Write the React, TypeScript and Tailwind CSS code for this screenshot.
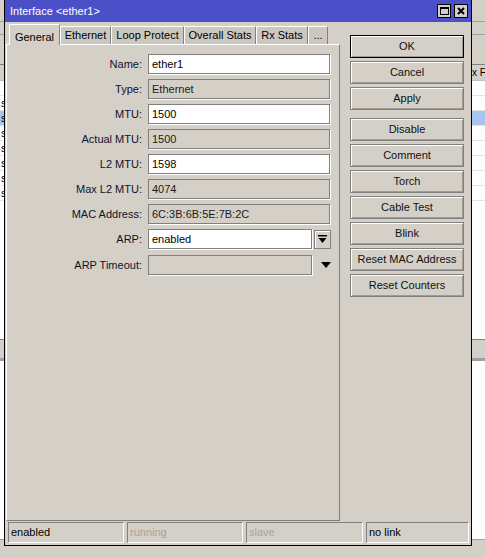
import React from 'react';

const FONT = { fontFamily: '"Liberation Sans", Arial, sans-serif' };

const TABS = [
  { label: 'General', w: 'w-[51px]' },
  { label: 'Ethernet', w: 'w-[51px]' },
  { label: 'Loop Protect', w: 'w-[73px]' },
  { label: 'Overall Stats', w: 'w-[72px]' },
  { label: 'Rx Stats', w: 'w-[52px]' },
  { label: '...', w: 'w-[20px]' },
];

const FIELDS = [
  { label: 'Name:', value: 'ether1', edit: true },
  { label: 'Type:', value: 'Ethernet', edit: false },
  { label: 'MTU:', value: '1500', edit: true },
  { label: 'Actual MTU:', value: '1500', edit: false },
  { label: 'L2 MTU:', value: '1598', edit: true },
  { label: 'Max L2 MTU:', value: '4074', edit: false },
  { label: 'MAC Address:', value: '6C:3B:6B:5E:7B:2C', edit: false },
];

const BUTTONS = [
  ['OK', 'Cancel', 'Apply'],
  ['Disable', 'Comment', 'Torch', 'Cable Test', 'Blink', 'Reset MAC Address', 'Reset Counters'],
];

const STATUS = [
  { text: 'enabled', w: 'w-[116px]', dim: false },
  { text: 'running', w: 'w-[116px]', dim: true },
  { text: 'slave', w: 'w-[117px]', dim: true },
  { text: 'no link', w: 'w-[103px]', dim: false },
];

const Label = ({ children }: { children: React.ReactNode }) => (
  <div className="w-[136px] shrink-0 text-right pr-[1px] text-[#10102a]">{children}</div>
);

const Field = ({ value, edit }: { value: string; edit: boolean }) => (
  <div
    className={`h-[20px] flex items-center px-[3px] border border-[#808080] shadow-[1px_1px_0_#fff] ${
      edit ? 'bg-white text-black' : 'bg-[#d4d0c8] text-[#1a1a1a]'
    }`}
  >
    {value}
  </div>
);

const Btn = ({ label, primary }: { label: string; primary?: boolean }) => (
  <div
    className={`h-[23px] flex items-center justify-center text-[#111] border shadow-[inset_1px_1px_0_#fff,inset_-1px_-1px_0_#a09c94] ${
      primary ? 'border-black' : 'border-[#808080]'
    }`}
  >
    {label}
  </div>
);

function Background() {
  return (
    <div className="absolute inset-0 flex flex-col bg-[#d4d0c8]">
      <div className="h-[22px] border-b border-[#a0a0a0]" />
      <div className="h-[13px] border-b border-[#a0a0a0]" />
      <div className="h-[30px] border-b border-[#808080]" />
      <div className="h-[16px] flex items-center pl-[472px] text-[10px] text-black border-b border-[#c0c0c0] whitespace-nowrap">
        x F
      </div>
      <div className="h-[258px] bg-white flex flex-col">
        <div className="h-[15px] border-b border-[#e4e4e4]" />
        {Array.from({ length: 7 }).map((_, i) => (
          <div
            key={i}
            className={`h-[15px] flex items-center pl-[1px] text-[11px] text-black border-b border-[#e4e4e4] ${
              i === 1 ? 'bg-[#a6c6ee]' : ''
            }`}
          >
            s
          </div>
        ))}
      </div>
      <div className="h-[22px] border-t border-[#808080] border-b-[3px] border-b-[#a0a0a0]" />
      <div className="h-[178px] bg-white" />
      <div className="flex-1 border-t border-[#a0a0a0]" />
    </div>
  );
}

export default function App() {
  return (
    <div className="relative w-[485px] h-[558px] overflow-hidden text-[11px]" style={FONT}>
      <Background />

      {/* dialog window */}
      <div className="absolute left-[4px] top-[-1px] w-[468px] h-[547px] border border-black bg-[#d4d0c8] flex flex-col">
        <div className="h-[22px] bg-[#4b50c9] flex items-center pl-[5px] pr-[3px]">
          <span className="flex-1 text-white text-[11px]">Interface &lt;ether1&gt;</span>
          <div className="w-[14px] h-[14px] border border-black bg-[#d4d0c8] flex items-center justify-center">
            <div className="w-[9px] h-[8px] border border-black border-t-2" />
          </div>
          <div className="w-[14px] h-[14px] ml-[3px] border border-black bg-[#d4d0c8] flex items-center justify-center">
            <svg width="8" height="8" viewBox="0 0 8 8">
              <path d="M1 1 L7 7 M7 1 L1 7" stroke="#000" strokeWidth="2" />
            </svg>
          </div>
        </div>

        <div className="flex-1 flex flex-col">
          <div className="flex">
            {/* tab control */}
            <div className="w-[334px] ml-[1px] flex flex-col">
              <div className="h-[22px] flex items-end pl-[3px]">
                {TABS.map((t, i) =>
                  i === 0 ? (
                    <div
                      key={t.label}
                      className={`${t.w} h-[21px] -mb-[1px] relative z-10 bg-[#d4d0c8] border-t border-l border-white border-r border-r-[#808080] flex items-start justify-center pt-[4px] text-black`}
                    >
                      {t.label}
                    </div>
                  ) : (
                    <div
                      key={t.label}
                      className={`${t.w} h-[18px] bg-[#ccc8c0] border-t border-l border-white border-r border-r-[#808080] flex items-center justify-center text-black`}
                    >
                      {t.label}
                    </div>
                  ),
                )}
              </div>
              <div className="h-[477px] border-t border-l border-white border-r border-b border-r-[#808080] border-b-[#808080] pt-[9px] flex flex-col gap-[5px]">
                {FIELDS.map((f) => (
                  <div key={f.label} className="flex items-center gap-[5px]">
                    <Label>{f.label}</Label>
                    <div className="w-[182px]">
                      <Field value={f.value} edit={f.edit} />
                    </div>
                  </div>
                ))}
                <div className="flex items-center gap-[5px]">
                  <Label>ARP:</Label>
                  <div className="w-[164px]">
                    <Field value="enabled" edit />
                  </div>
                  <div className="w-[17px] h-[19px] -ml-[3px] border border-[#808080] shadow-[inset_1px_1px_0_#fff] flex items-center justify-center">
                    <svg width="9" height="9" viewBox="0 0 9 9">
                      <rect x="0" y="0" width="9" height="1.5" fill="#000" />
                      <path d="M0.5 3 H8.5 L4.5 8 Z" fill="#000" />
                    </svg>
                  </div>
                </div>
                <div className="flex items-center gap-[5px] mt-[1px]">
                  <Label>ARP Timeout:</Label>
                  <div className="w-[164px]">
                    <Field value="" edit={false} />
                  </div>
                  <div className="w-[17px] flex items-center justify-center">
                    <svg width="10" height="6" viewBox="0 0 10 6">
                      <path d="M0 0 H10 L5 6 Z" fill="#000" />
                    </svg>
                  </div>
                </div>
              </div>
            </div>

            {/* action buttons */}
            <div className="w-[114px] ml-[10px] mt-[13px] flex flex-col">
              <div className="flex flex-col gap-[3px]">
                {BUTTONS[0].map((b, i) => (
                  <Btn key={b} label={b} primary={i === 0} />
                ))}
              </div>
              <div className="flex flex-col gap-[3px] mt-[8px]">
                {BUTTONS[1].map((b) => (
                  <Btn key={b} label={b} />
                ))}
              </div>
            </div>
          </div>

          {/* status bar */}
          <div className="flex gap-[3px] ml-[3px] mt-[1px]">
            {STATUS.map((s) => (
              <div
                key={s.text}
                className={`${s.w} h-[21px] flex items-center px-[2px] border border-t-[#808080] border-l-[#808080] border-b-white border-r-white ${
                  s.dim ? 'text-[#a8a49c]' : 'text-black'
                }`}
              >
                {s.text}
              </div>
            ))}
          </div>
        </div>
      </div>
    </div>
  );
}
